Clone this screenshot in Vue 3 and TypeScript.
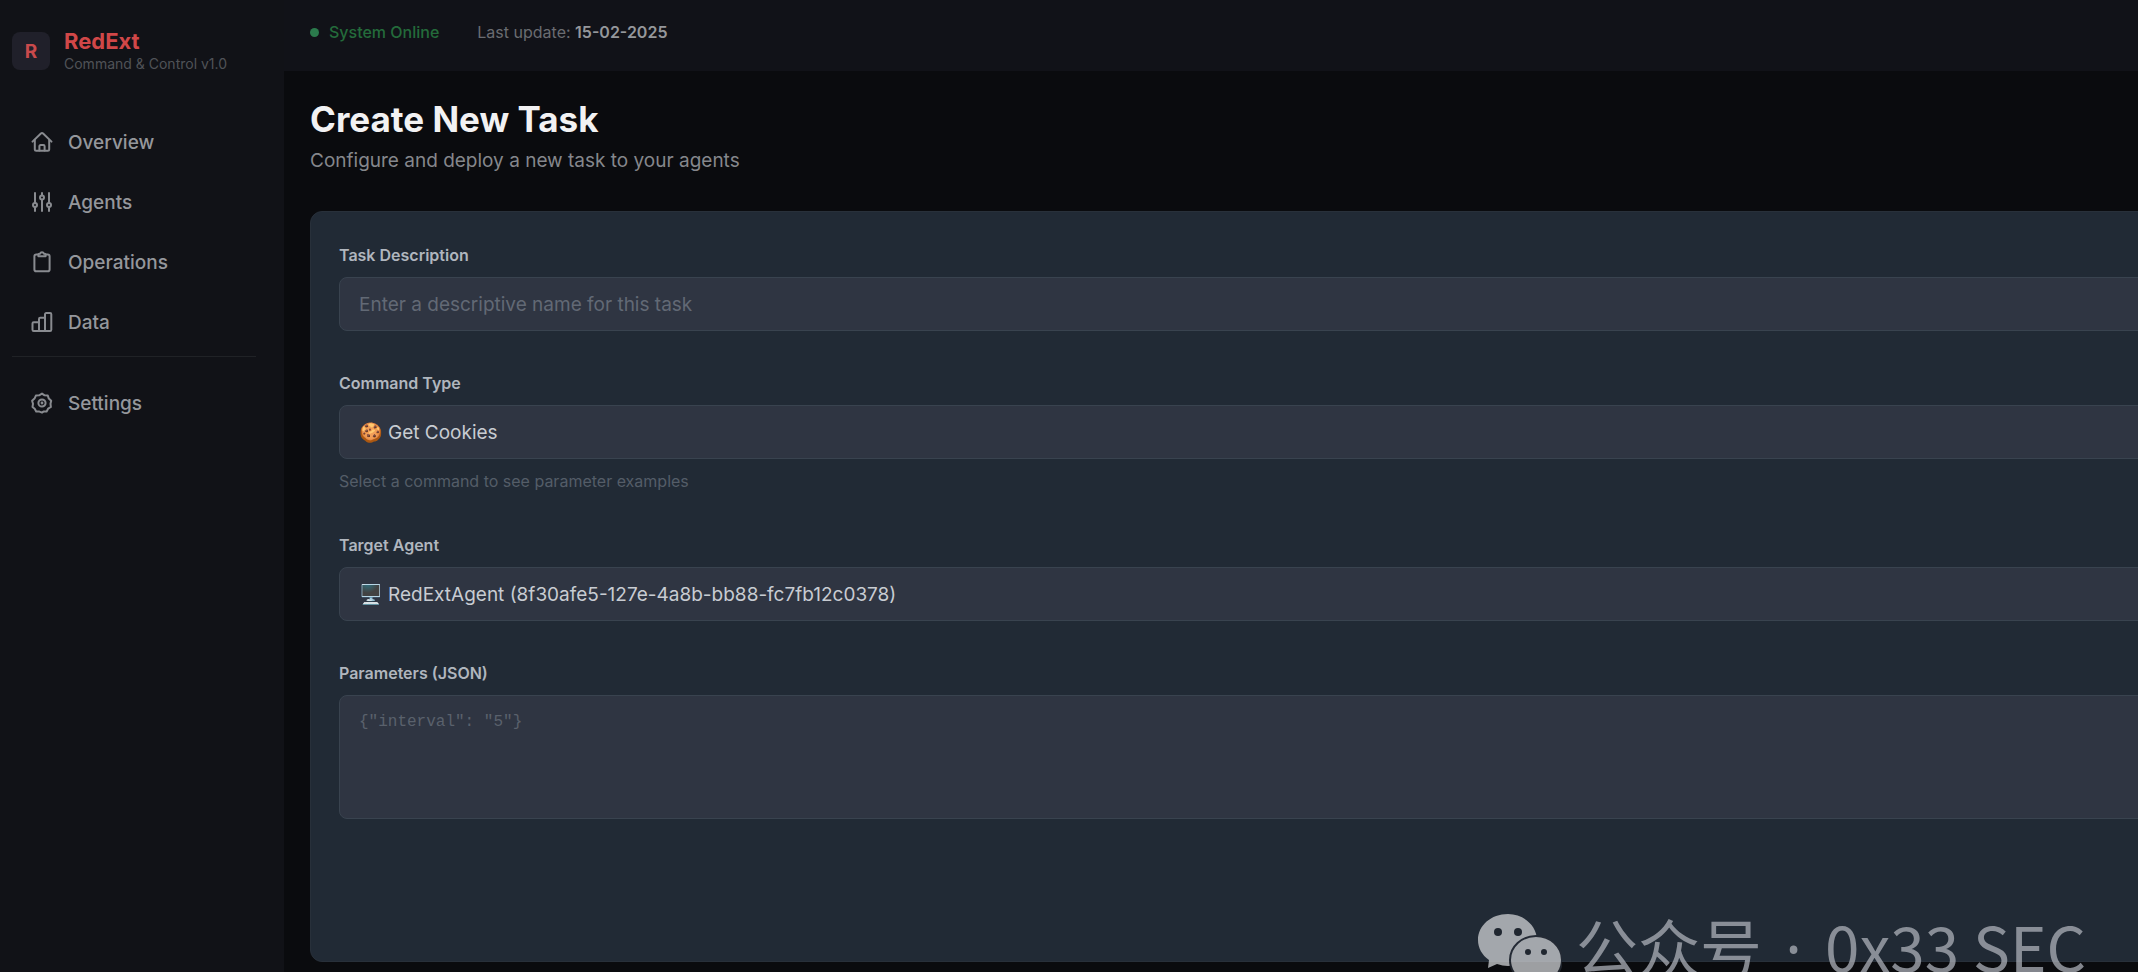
<script setup lang="ts">
import { ref } from 'vue'

interface NavItem {
  label: string
  icon: 'home' | 'sliders' | 'clipboard' | 'chart' | 'gear'
}

const mainNav: NavItem[] = [
  { label: 'Overview', icon: 'home' },
  { label: 'Agents', icon: 'sliders' },
  { label: 'Operations', icon: 'clipboard' },
  { label: 'Data', icon: 'chart' },
]
const extraNav: NavItem[] = [{ label: 'Settings', icon: 'gear' }]

const iconPaths: Record<NavItem['icon'], string[]> = {
  home: [
    'M2.500 11.600 10.900 3.500a1.600 1.600 0 0 1 2.200 0l8.400 8.100',
    'M4.800 9.800v9.600c0 .8.6 1.400 1.400 1.400h11.600c.8 0 1.400-.6 1.400-1.400V9.800',
    'M9.400 20.600v-4.400c0-.7.5-1.200 1.200-1.200h2.800c.7 0 1.200.5 1.200 1.200v4.400',
  ],
  sliders: [
    'M5 3v9.600M5 17.400V21',
    'M12 3v2.200M12 10v11',
    'M19 3v9.600M19 17.400V21',
    'M3 15a2 2 0 1 0 4 0 2 2 0 1 0-4 0',
    'M10 7.600a2 2 0 1 0 4 0 2 2 0 1 0-4 0',
    'M17 15a2 2 0 1 0 4 0 2 2 0 1 0-4 0',
  ],
  clipboard: [
    'M8.400 4.400H6.200c-1 0-1.800.8-1.800 1.800v13.200c0 1 .8 1.800 1.800 1.800h11.600c1 0 1.800-.8 1.800-1.800V6.200c0-1-.8-1.800-1.800-1.800h-2.200',
    'M8.400 6.200V4.600c0-.5.4-.9.9-.9h.8a2 2 0 0 1 3.800 0h.8c.5 0 .9.4.9.9v1.600z',
  ],
  chart: [
    'M9 21V13.400c0-.7-.5-1.200-1.200-1.200H3.700c-.7 0-1.200.5-1.200 1.200v6.400c0 .7.5 1.200 1.200 1.200z',
    'M9 21V9c0-.7.5-1.200 1.200-1.200H15V21z',
    'M15 21V4.200c0-.7.5-1.200 1.200-1.200h3.900c.7 0 1.200.5 1.200 1.200v15.600c0 .7-.5 1.200-1.200 1.200z',
  ],
  gear: [
    'M12 2.600l2.600 1.700 3.200.3 1 3 2.400 2.200-.7 3 .4 3.200-2.800 1.700-1.500 2.800-3.200.1L12 21.600l-2.600-1-3.200-.1-1.500-2.800-2.200-1.700.5-3.200-.9-3 2.400-2.200 1.400-3 3.200-.3z',
    'M8.400 12a3.600 3.600 0 1 0 7.200 0 3.600 3.600 0 1 0-7.200 0',
    'M11.600 12a.4.4 0 1 0 .8 0 .4.4 0 1 0-.8 0',
  ],
}

const description = ref('')
const command = ref('cookies')
const agent = ref('8f30afe5-127e-4a8b-bb88-fc7fb12c0378')
const parameters = ref('')
</script>

<template>
  <div class="app">
    <aside class="sidebar">
      <div class="brand">
        <div class="brand-mark">R</div>
        <div>
          <div class="brand-name">RedExt</div>
          <div class="brand-tag">Command &amp; Control v1.0</div>
        </div>
      </div>
      <nav class="nav">
        <a v-for="item in mainNav" :key="item.label" href="#" class="nav-link">
          <svg viewBox="0 0 24 24" aria-hidden="true">
            <path v-for="d in iconPaths[item.icon]" :key="d" :d="d" />
          </svg>
          {{ item.label }}
        </a>
      </nav>
      <nav class="nav nav-extra">
        <a v-for="item in extraNav" :key="item.label" href="#" class="nav-link">
          <svg viewBox="0 0 24 24" aria-hidden="true">
            <path v-for="d in iconPaths[item.icon]" :key="d" :d="d" />
          </svg>
          {{ item.label }}
        </a>
      </nav>
    </aside>

    <div class="content">
      <header class="topbar">
        <span class="status"><i class="status-dot"></i>System Online</span>
        <span class="updated">Last update: <b>15-02-2025</b></span>
      </header>

      <main class="main">
        <h1>Create New Task</h1>
        <p class="lead">Configure and deploy a new task to your agents</p>

        <form class="panel" @submit.prevent>
          <div class="field">
            <label for="description">Task Description</label>
            <input id="description" v-model="description" type="text" placeholder="Enter a descriptive name for this task" />
          </div>
          <div class="field">
            <label for="command">Command Type</label>
            <select id="command" v-model="command">
              <option value="cookies">🍪 Get Cookies</option>
            </select>
            <p class="hint">Select a command to see parameter examples</p>
          </div>
          <div class="field">
            <label for="agent">Target Agent</label>
            <select id="agent" v-model="agent">
              <option value="8f30afe5-127e-4a8b-bb88-fc7fb12c0378">🖥️ RedExtAgent (8f30afe5-127e-4a8b-bb88-fc7fb12c0378)</option>
            </select>
          </div>
          <div class="field">
            <label for="parameters">Parameters (JSON)</label>
            <textarea id="parameters" v-model="parameters" placeholder='{"interval": "5"}'></textarea>
          </div>
        </form>
      </main>
    </div>

    <div class="watermark">
      <svg viewBox="0 0 84 72" aria-hidden="true">
        <path class="bubble" d="M30 0C13 0 0 11.500 0 26c0 8 4 15 11 20l-1 8 9-4c4 1 7 2 11 2 17 0 29-12 29-26S46 0 30 0z" />
        <ellipse class="bubble ring" cx="58" cy="46" rx="26" ry="24" />
        <circle class="eye" cx="20" cy="18" r="4" />
        <circle class="eye" cx="40" cy="18" r="4" />
        <circle class="eye" cx="50" cy="38" r="3" />
        <circle class="eye" cx="66" cy="38" r="3" />
      </svg>
      <span class="watermark-text">公众号<span class="dot"> · </span>0x33 SEC</span>
    </div>
  </div>
</template>

<style>
body {
  margin: 0;
  background: #0a0b0e;
}
</style>

<style scoped>
* {
  box-sizing: border-box;
}
.app {
  position: relative;
  display: flex;
  min-height: 100vh;
  overflow: hidden;
  background: #0a0b0e;
  color: #9a9ca1;
  font-family: Inter, "Noto Sans", sans-serif;
}
.sidebar {
  flex: 0 0 284px;
  padding: 28px 28px 0 12px;
  background: #111217;
}
.brand {
  display: flex;
  align-items: center;
  gap: 14px;
  height: 46px;
}
.brand-mark {
  display: flex;
  align-items: center;
  justify-content: center;
  width: 38px;
  height: 38px;
  border-radius: 8px;
  background: #20202a;
  color: #c94a4c;
  font-size: 19px;
  font-weight: 700;
}
.brand-name {
  color: #d14748;
  font-size: 22px;
  font-weight: 700;
  line-height: 26px;
}
.brand-tag {
  color: #505257;
  font-size: 14px;
  line-height: 20px;
}
.nav {
  display: flex;
  flex-direction: column;
  gap: 4px;
  margin-top: 40px;
}
.nav-extra {
  margin-top: 6px;
  padding-top: 18px;
  border-top: 1px solid #202226;
}
.nav-link {
  display: flex;
  align-items: center;
  gap: 14px;
  height: 56px;
  padding-left: 18px;
  color: #95979c;
  font-size: 19px;
  font-weight: 500;
  text-decoration: none;
}
.nav-link svg {
  width: 24px;
  height: 24px;
  fill: none;
  stroke: #898b90;
  stroke-width: 2;
  stroke-linecap: round;
  stroke-linejoin: round;
}
.content {
  display: flex;
  flex: 1;
  flex-direction: column;
  min-width: 0;
}
.topbar {
  display: flex;
  align-items: flex-start;
  gap: 38px;
  height: 71px;
  padding: 20px 26px 0;
  background: #111218;
  font-size: 16px;
  line-height: 24px;
}
.status {
  display: flex;
  align-items: center;
  gap: 10px;
  color: #246b3b;
  font-weight: 500;
}
.status-dot {
  width: 9px;
  height: 9px;
  border-radius: 50%;
  background: #2b7a4c;
}
.updated {
  color: #6a6c71;
}
.updated b {
  color: #95979b;
  font-weight: 600;
}
.main {
  display: flex;
  flex: 1;
  flex-direction: column;
  margin-right: -60px;
  padding: 24px 0 10px 26px;
}
h1 {
  margin: 0;
  color: #f2f2f3;
  font-size: 35px;
  font-weight: 700;
  line-height: 48px;
}
.lead {
  margin: 4px 0 37px;
  color: #85878c;
  font-size: 19px;
  line-height: 27px;
}
.panel {
  display: flex;
  flex: 1;
  flex-direction: column;
  gap: 40px;
  padding: 31px 28px;
  border: 1px solid #28303a;
  border-radius: 12px;
  background: #212a35;
}
.field {
  display: flex;
  flex-direction: column;
}
label {
  margin-bottom: 10px;
  color: #b0b6be;
  font-size: 16px;
  font-weight: 600;
  line-height: 24px;
}
input,
select,
textarea {
  width: 100%;
  height: 54px;
  margin: 0;
  padding: 0 19px;
  border: 1px solid #39434f;
  border-radius: 8px;
  outline: none;
  appearance: none;
  background: #2f3542;
  color: #c8ccd2;
  font-family: Inter, "Noto Color Emoji", sans-serif;
  font-size: 19px;
}
textarea {
  height: 124px;
  padding-top: 14px;
  resize: none;
  font-family: "Liberation Mono", monospace;
  font-size: 16px;
  line-height: 24px;
}
input::placeholder {
  color: #626975;
  opacity: 1;
}
textarea::placeholder {
  color: #5a616c;
  opacity: 1;
}
.hint {
  margin: 10px 0 0;
  color: #545d68;
  font-size: 16px;
  line-height: 24px;
}
.watermark {
  position: absolute;
  right: 52px;
  bottom: -14px;
  display: flex;
  align-items: flex-start;
  gap: 14px;
  color: #acb0b8;
  opacity: 0.75;
  pointer-events: none;
}
.watermark svg {
  width: 84px;
  height: 72px;
}
.bubble {
  fill: #cfd1d4;
}
.ring {
  stroke: #252b35;
  stroke-width: 2;
}
.eye {
  fill: #20262f;
}
.watermark-text {
  font-family: "Noto Sans CJK SC", sans-serif;
  font-size: 62px;
  font-weight: 400;
  line-height: 62px;
  white-space: nowrap;
}
.dot {
  padding: 0 7px;
  font-family: "Noto Sans", sans-serif;
}
</style>
